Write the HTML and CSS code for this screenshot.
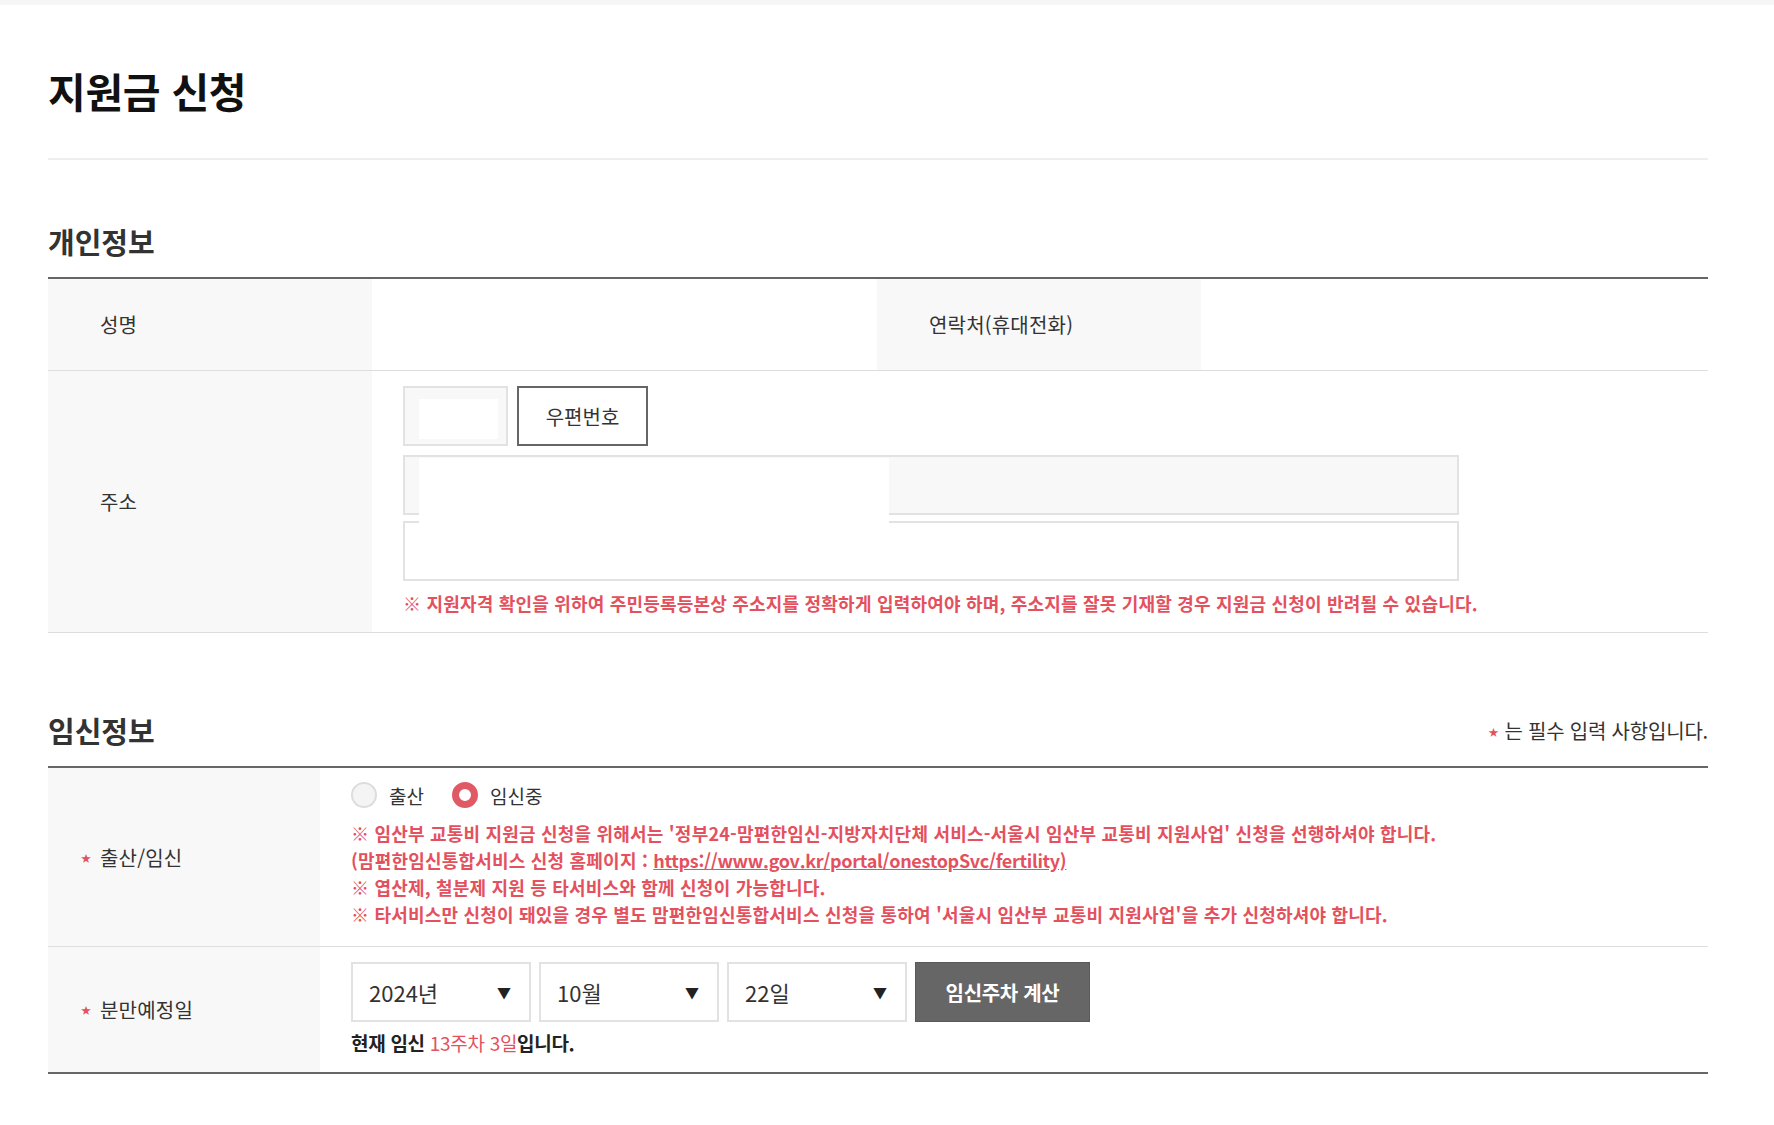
FILE: index.html
```html
<!DOCTYPE html>
<html lang="ko">
<head>
<meta charset="utf-8">
<title>지원금 신청</title>
<link rel="stylesheet" href="styles.css">
</head>
<body>
<div class="topbar"></div>
<main class="page">
  <h1 class="page-title">지원금 신청</h1>

  <section class="section">
    <div class="section-head">
      <h2 class="section-title">개인정보</h2>
    </div>
    <div class="form-table">
      <div class="row row-personal">
        <div class="label">성명</div>
        <div class="value"></div>
        <div class="label">연락처(휴대전화)</div>
        <div class="value"></div>
      </div>
      <div class="row row-address">
        <div class="label">주소</div>
        <div class="value address-cell">
          <div class="zip-line">
            <div class="input readonly zip"></div>
            <button class="btn-outline" type="button">우편번호</button>
          </div>
          <div class="input readonly addr"></div>
          <div class="input addr"></div>
          <p class="notice">※ 지원자격 확인을 위하여 주민등록등본상 주소지를 정확하게 입력하여야 하며, 주소지를 잘못 기재할 경우 지원금 신청이 반려될 수 있습니다.</p>
          <div class="mask mask-zip"></div>
          <div class="mask mask-addr"></div>
        </div>
      </div>
    </div>
  </section>

  <section class="section section-second">
    <div class="section-head">
      <h2 class="section-title">임신정보</h2>
      <p class="required-note"><span class="star">★</span>는 필수 입력 사항입니다.</p>
    </div>
    <div class="form-table table-bottom">
      <div class="row row-pregnancy">
        <div class="label narrow"><span class="star">★</span>출산/임신</div>
        <div class="value preg-cell">
          <div class="radios">
            <label class="radio"><span class="radio-dot"></span>출산</label>
            <label class="radio"><span class="radio-dot checked"></span>임신중</label>
          </div>
          <div class="notes">
            <p>※ 임산부 교통비 지원금 신청을 위해서는 '정부24-맘편한임신-지방자치단체 서비스-서울시 임산부 교통비 지원사업' 신청을 선행하셔야 합니다.</p>
            <p>(맘편한임신통합서비스 신청 홈페이지 : <a class="link" href="#">https://www.gov.kr/portal/onestopSvc/fertility)</a></p>
            <p>※ 엽산제, 철분제 지원 등 타서비스와 함께 신청이 가능합니다.</p>
            <p>※ 타서비스만 신청이 돼있을 경우 별도 맘편한임신통합서비스 신청을 통하여 '서울시 임산부 교통비 지원사업'을 추가 신청하셔야 합니다.</p>
          </div>
        </div>
      </div>
      <div class="row row-due">
        <div class="label narrow"><span class="star">★</span>분만예정일</div>
        <div class="value due-cell">
          <div class="date-line">
            <div class="select"><span>2024년</span><span class="arrow">▼</span></div>
            <div class="select"><span>10월</span><span class="arrow">▼</span></div>
            <div class="select"><span>22일</span><span class="arrow">▼</span></div>
            <button class="btn-dark" type="button">임신주차 계산</button>
          </div>
          <p class="result">현재 임신 <span class="red">13주차 3일</span>입니다.</p>
        </div>
      </div>
    </div>
  </section>
</main>
</body>
</html>
```

FILE: styles.css
```css
* { box-sizing: border-box; }

html, body {
  margin: 0;
  padding: 0;
  background: #ffffff;
}

body {
  font-family: "Noto Sans CJK KR", "Noto Sans", sans-serif;
  color: #333333;
}

.topbar {
  height: 5px;
  background: #f6f6f6;
}

.page {
  padding: 0 66px 0 48px;
}

.page-title {
  margin: 60px 0 0 0;
  padding-bottom: 43px;
  border-bottom: 2px solid #eeeeee;
  font-size: 41px;
  line-height: 50px;
  font-weight: 700;
  color: #111111;
  letter-spacing: -0.3px;
}

.section {
  margin-top: 63px;
}

.section-second {
  margin-top: 79px;
}

.section-head {
  display: flex;
  align-items: center;
  justify-content: space-between;
  height: 36px;
  margin-bottom: 18px;
}

.section-title {
  margin: 0;
  font-size: 29px;
  line-height: 36px;
  font-weight: 700;
  color: #333333;
  letter-spacing: 0;
}

.required-note {
  margin: 0;
  font-size: 20px;
  color: #333333;
  letter-spacing: -0.2px;
}

.required-note .star {
  margin-right: 6px;
}

.star {
  color: #e4515e;
  font-size: 10px;
  vertical-align: 3px;
}

.form-table {
  border-top: 2px solid #666666;
}

.table-bottom {
  border-bottom: 2px solid #666666;
}

.row {
  display: grid;
  border-bottom: 1px solid #dddddd;
}

.table-bottom .row:last-child {
  border-bottom: none;
}

.row-personal {
  grid-template-columns: 324px 505px 324px 1fr;
  height: 92px;
}

.row-address {
  grid-template-columns: 324px 1fr;
  height: 262px;
}

.row-pregnancy {
  grid-template-columns: 272px 1fr;
  height: 179px;
}

.row-due {
  grid-template-columns: 272px 1fr;
  height: 125px;
}

.label {
  background: #f8f8f8;
  display: flex;
  align-items: center;
  padding-left: 52px;
  font-size: 20px;
  color: #333333;
  letter-spacing: 0.2px;
}

.label.narrow {
  padding-left: 33px;
}

.label.narrow .star {
  display: inline-block;
  width: 19px;
}

.value {
  background: #ffffff;
}

.address-cell {
  position: relative;
  padding: 15px 0 0 31px;
}

.zip-line {
  display: flex;
  gap: 9px;
  margin-bottom: 9px;
}

.input {
  height: 60px;
  border: 2px solid #e2e2e2;
  background: #ffffff;
}

.input.readonly {
  background: #f8f8f8;
}

.input.zip {
  width: 105px;
}

.input.addr {
  width: 1056px;
  margin-bottom: 6px;
}

.btn-outline {
  width: 131px;
  height: 60px;
  border: 2px solid #666666;
  background: #ffffff;
  font-family: inherit;
  font-size: 20px;
  color: #333333;
  padding: 0;
  letter-spacing: 0;
}

.notice {
  margin: 9px 0 0 0;
  font-size: 18px;
  line-height: 26px;
  font-weight: 700;
  color: #e4515e;
  letter-spacing: 0.2px;
}

.mask {
  position: absolute;
  background: #ffffff;
}

.mask-zip {
  left: 47px;
  top: 28px;
  width: 79px;
  height: 40px;
}

.mask-addr {
  left: 47px;
  top: 87px;
  width: 470px;
  height: 66px;
}

.preg-cell {
  padding: 12px 0 0 31px;
}

.radios {
  display: flex;
  align-items: center;
  gap: 28px;
  height: 30px;
  margin-bottom: 10px;
}

.radio {
  display: flex;
  align-items: center;
  gap: 12px;
  font-size: 19px;
  color: #333333;
  letter-spacing: 0;
}

.radio-dot {
  width: 26px;
  height: 26px;
  border-radius: 50%;
  border: 2px solid #dddddd;
  background: #f4f4f4;
}

.radio-dot.checked {
  border: 7px solid #e05a66;
  background: #ffffff;
}

.notes p {
  margin: 0;
  font-size: 18px;
  line-height: 27px;
  font-weight: 700;
  color: #e4515e;
  letter-spacing: 0.2px;
}

.link {
  color: #e4515e;
  text-decoration: underline;
  letter-spacing: -0.3px;
}

.due-cell {
  padding: 15px 0 0 31px;
}

.date-line {
  display: flex;
  gap: 8px;
}

.select {
  width: 180px;
  height: 60px;
  border: 2px solid #e2e2e2;
  display: flex;
  align-items: center;
  justify-content: space-between;
  padding: 0 18px 0 16px;
  font-size: 22px;
  color: #333333;
  letter-spacing: 0;
}

.arrow {
  font-size: 14px;
  color: #222222;
}

.btn-dark {
  width: 175px;
  height: 60px;
  border: 1px solid #5a5a5a;
  background: #666666;
  color: #ffffff;
  font-family: inherit;
  font-size: 20px;
  font-weight: 700;
  letter-spacing: -0.3px;
  padding: 0;
}

.result {
  margin: 8px 0 0 0;
  font-size: 19px;
  line-height: 26px;
  font-weight: 700;
  color: #222222;
  letter-spacing: -0.3px;
}

.result .red {
  color: #e4515e;
  font-weight: 400;
}
```
